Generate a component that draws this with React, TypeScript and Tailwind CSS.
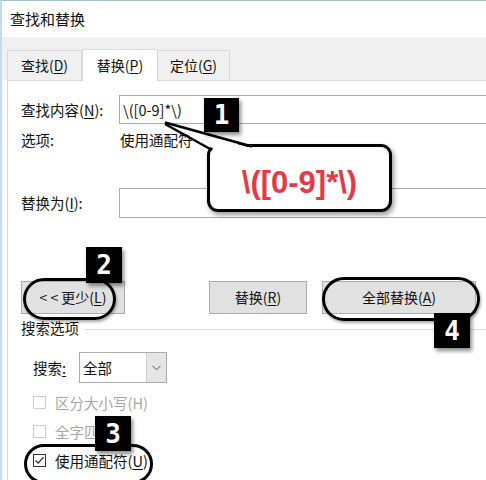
import React from 'react';

const font = { fontFamily: '"Noto Sans CJK SC", "Liberation Sans", sans-serif' };

function U({ children }: { children: React.ReactNode }) {
  return <span className="underline underline-offset-2">{children}</span>;
}

function Badge({ n, className }: { n: string; className: string }) {
  return (
    <div
      className={`absolute flex items-center justify-center bg-black text-white text-[26px] font-bold leading-none shadow-[2px_3px_4px_rgba(0,0,0,0.45)] ${className}`}
      style={{ fontFamily: '"DejaVu Sans Mono", monospace' }}
    >
      {n}
    </div>
  );
}

function Checkbox({ checked, disabled }: { checked?: boolean; disabled?: boolean }) {
  return (
    <div
      className={`w-[13px] h-[13px] border bg-white flex items-center justify-center ${
        disabled ? 'border-[#cccccc]' : 'border-[#333333]'
      }`}
    >
      {checked && (
        <svg width="11" height="11" viewBox="0 0 11 11">
          <path d="M1.5 5.5 L4.2 8.2 L9.5 2.2" fill="none" stroke="#222" strokeWidth="1.2" />
        </svg>
      )}
    </div>
  );
}

function Button({ children, width }: { children: React.ReactNode; width: string }) {
  return (
    <div
      className={`${width} h-[33px] bg-[#e1e1e1] border border-[#adadad] flex items-center justify-center text-[14px] text-[#111]`}
    >
      {children}
    </div>
  );
}

export default function App() {
  return (
    <div
      className="relative w-[486px] h-[480px] overflow-hidden bg-white border-l-2 border-t border-l-[#c3dbef] border-t-[#a9c3d6] text-[#111]"
      style={font}
    >
      {/* Title bar */}
      <div className="h-[36px] flex items-center pl-[8px] text-[15px]">查找和替换</div>

      {/* Tab strip */}
      <div className="h-[43px] bg-[#f0f0f0] flex items-end pl-[5px] text-[14px]">
        <div className="h-[30px] w-[75px] border border-b-0 border-[#d9d9d9] flex items-center justify-center">
          查找(<U>D</U>)
        </div>
        <div className="h-[32px] w-[76px] bg-white border border-b-0 border-[#d9d9d9] flex items-center justify-center -mb-px relative">
          替换(<U>P</U>)
        </div>
        <div className="h-[30px] w-[72px] border border-b-0 border-l-0 border-[#d9d9d9] flex items-center justify-center">
          定位(<U>G</U>)
        </div>
      </div>

      {/* Panel */}
      <div className="ml-[5px] h-[400px] border-t border-l border-[#d9d9d9] pl-[13px] text-[14.5px]">
        <div className="mt-[14px] h-[29px] flex items-center">
          <div className="w-[98px]">
            查找内容(<U>N</U>):
          </div>
          <div className="flex-1 h-full border border-r-0 border-[#ababab] flex items-center pl-[3px]">
            \([0-9]*\)
          </div>
        </div>

        <div className="mt-[6px] h-[20px] flex items-center">
          <div className="w-[99px]">选项:</div>
          <div>使用通配符</div>
        </div>

        <div className="mt-[38px] h-[30px] flex items-center">
          <div className="w-[98px]">
            替换为(<U>I</U>):
          </div>
          <div className="flex-1 h-full border border-r-0 border-[#ababab]" />
        </div>

        <div className="mt-[63px] flex items-center">
          <Button width="w-[104px]">
            &lt; &lt; 更少(<U>L</U>)
          </Button>
          <div className="ml-[84px]">
            <Button width="w-[98px]">
              替换(<U>R</U>)
            </Button>
          </div>
          <div className="ml-[15px]">
            <Button width="w-[154px]">
              全部替换(<U>A</U>)
            </Button>
          </div>
        </div>

        <div className="mt-[4px] h-[20px] flex items-center">
          <span>搜索选项</span>
          <div className="flex-1 ml-[6px] h-px bg-[#dcdcdc] mt-[3px]" />
        </div>

        <div className="mt-[14px] h-[31px] flex items-center pl-[12px]">
          <div className="w-[46px]">
            搜索<U>:</U>
          </div>
          <div className="w-[88px] h-full border border-[#acacac] flex">
            <div className="flex-1 flex items-center pl-[3px]">全部</div>
            <div className="w-[20px] bg-[#e5e5e5] border-l border-[#cfcfcf] flex items-center justify-center">
              <svg width="9" height="6" viewBox="0 0 9 6">
                <path d="M0.5 0.8 L4.5 4.8 L8.5 0.8" fill="none" stroke="#555" strokeWidth="1" />
              </svg>
            </div>
          </div>
        </div>

        <div className="mt-[5px] pl-[12px]">
          <div className="h-[29px] flex items-center gap-[9px] text-[#a6a6a6]">
            <Checkbox disabled />
            <span>区分大小写(H)</span>
          </div>
          <div className="h-[29px] flex items-center gap-[9px] text-[#a6a6a6]">
            <Checkbox disabled />
            <span>全字匹配(Y)</span>
          </div>
          <div className="h-[29px] flex items-center gap-[9px]">
            <Checkbox checked />
            <span>
              使用通配符(<U>U</U>)
            </span>
          </div>
        </div>
      </div>

      {/* Annotations */}
      <div className="absolute left-[205px] top-[143px] w-[185px] h-[68px] bg-white border-[3px] border-black rounded-[11px] shadow-[2px_3px_5px_rgba(0,0,0,0.4)] flex items-center justify-center pt-[8px]">
        <span
          className="text-[31px] font-bold text-[#e53a45] leading-none"
          style={{ fontFamily: '"Liberation Sans", Arial, sans-serif' }}
        >
          \([0-9]*\)
        </span>
      </div>
      <svg className="absolute left-0 top-0 pointer-events-none" width="486" height="480">
        <polygon points="164,122.5 249,147 211,147.5" fill="white" />
        <line x1="163" y1="121.5" x2="250" y2="145.5" stroke="black" strokeWidth="2.5" />
        <line x1="163" y1="123" x2="210" y2="149" stroke="black" strokeWidth="2.5" />
      </svg>

      <div className="absolute left-[21px] top-[277px] w-[93px] h-[42px] rounded-full border-[3px] border-black shadow-[1px_2px_3px_rgba(0,0,0,0.35)]" />
      <div className="absolute left-[320px] top-[276px] w-[158px] h-[44px] rounded-full border-[3px] border-black shadow-[1px_2px_3px_rgba(0,0,0,0.35)]" />
      <div className="absolute left-[22px] top-[443px] w-[129px] h-[40px] rounded-full border-[3px] border-black" />

      <Badge n="1" className="left-[202px] top-[97px] w-[35px] h-[34px]" />
      <Badge n="2" className="left-[84px] top-[246px] w-[36px] h-[36px]" />
      <Badge n="3" className="left-[93px] top-[415px] w-[36px] h-[35px]" />
      <Badge n="4" className="left-[432px] top-[312px] w-[36px] h-[35px]" />
    </div>
  );
}
